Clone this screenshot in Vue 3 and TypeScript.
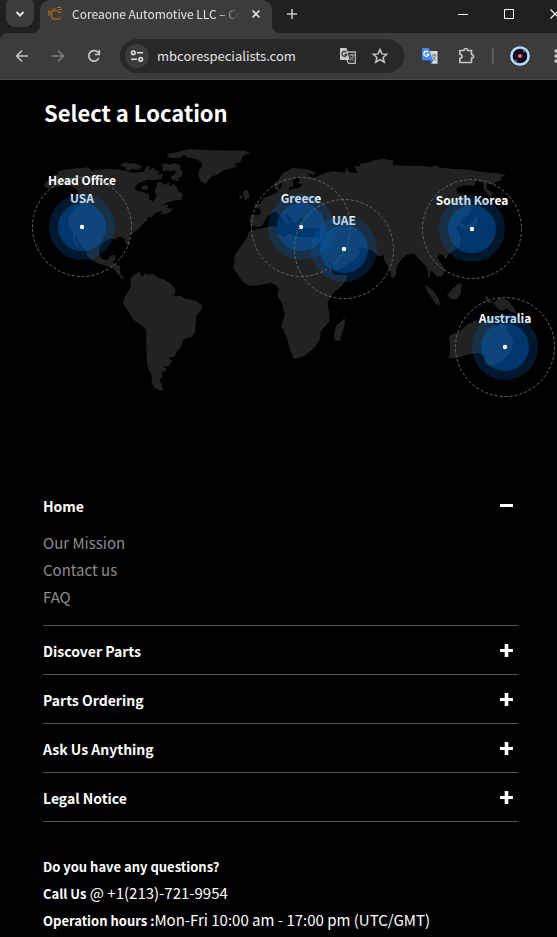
<script setup lang="ts">
import { ref } from 'vue'

interface Marker {
  lines: string[]
  x: number
  y: number
}

interface Section {
  title: string
  links: string[]
}

const MAP_WIDTH = 557
const MAP_HEIGHT = 260

const markers: Marker[] = [
  { lines: ['Head Office', 'USA'], x: 82, y: 87 },
  { lines: ['Greece'], x: 301, y: 87 },
  { lines: ['UAE'], x: 344, y: 109 },
  { lines: ['South Korea'], x: 472, y: 89 },
  { lines: ['Australia'], x: 505, y: 207 },
]

const sections: Section[] = [
  { title: 'Home', links: ['Our Mission', 'Contact us', 'FAQ'] },
  { title: 'Discover Parts', links: [] },
  { title: 'Parts Ordering', links: [] },
  { title: 'Ask Us Anything', links: [] },
  { title: 'Legal Notice', links: [] },
]

const openIndex = ref<number>(0)
const address = ref('mbcorespecialists.com')

function toggle(index: number): void {
  openIndex.value = openIndex.value === index ? -1 : index
}

function place(marker: Marker): Record<string, string> {
  return {
    left: `${(marker.x / MAP_WIDTH) * 100}%`,
    top: `${(marker.y / MAP_HEIGHT) * 100}%`,
  }
}
</script>

<template>
  <div class="window">
    <header class="chrome">
      <div class="tabstrip">
        <button class="tab-search" type="button" aria-label="Search tabs">
          <svg width="12" height="12" viewBox="0 0 12 12"><path d="M2.500 4l3.500 3.500L9.500 4" fill="none" stroke="#e3e3e3" stroke-width="2" /></svg>
        </button>
        <div class="tab">
          <svg class="favicon" width="16" height="16" viewBox="0 0 16 16" fill="none" stroke="#9a6526" stroke-width="1.400">
            <path d="M4 2.500h4M6 2.500v2" stroke="#76502a" />
            <path d="M1 4v6M1 7h2.500V5.500l2-1H9l2 2h1.500V5M3.500 7v3.500l2 2.500H11l1.500-1.500" />
            <path d="M12.500 7h2v4h-2z" stroke="#54442f" />
            <path d="M9 1.500h4M11 3.500h3" stroke="#a96f25" stroke-width="1" />
          </svg>
          <span class="tab-title">Coreaone Automotive LLC – Co</span>
          <button class="tab-close" type="button" aria-label="Close tab">
            <svg width="10" height="10" viewBox="0 0 10 10"><path d="M1.500 1.500l7 7M8.500 1.500l-7 7" stroke="#e3e3e3" stroke-width="1.600" /></svg>
          </button>
        </div>
        <button class="new-tab" type="button" aria-label="New tab">
          <svg width="12" height="12" viewBox="0 0 12 12"><path d="M6 1v10M1 6h10" stroke="#c7c7c7" stroke-width="1.600" /></svg>
        </button>
        <div class="window-controls">
          <button type="button" aria-label="Minimize"><svg width="10" height="10" viewBox="0 0 10 10"><path d="M0 5.500h10" stroke="#fff" /></svg></button>
          <button type="button" aria-label="Maximize"><svg width="10" height="10" viewBox="0 0 10 10"><path d="M.5.500h9v9h-9z" fill="none" stroke="#fff" /></svg></button>
          <button type="button" aria-label="Close"><svg width="10" height="10" viewBox="0 0 10 10"><path d="M.5.500l9 9M9.500.500l-9 9" stroke="#fff" stroke-width="1.200" /></svg></button>
        </div>
      </div>

      <div class="toolbar">
        <button class="tool" type="button" aria-label="Back">
          <svg width="16" height="16" viewBox="0 0 16 16" fill="none" stroke="#c7c7c7" stroke-width="1.600"><path d="M14 8H3M8 2.500L2.500 8 8 13.500" /></svg>
        </button>
        <button class="tool" type="button" aria-label="Forward">
          <svg width="16" height="16" viewBox="0 0 16 16" fill="none" stroke="#7c7c7c" stroke-width="1.600"><path d="M2 8h11M8 2.500L13.500 8 8 13.500" /></svg>
        </button>
        <button class="tool" type="button" aria-label="Reload">
          <svg width="16" height="16" viewBox="0 0 16 16" fill="none" stroke="#c7c7c7" stroke-width="1.700"><path d="M12.800 10.200A5.300 5.300 0 1 1 12 4.300l1.300 1.500M13.300 2v4.500H8.800" /></svg>
        </button>
        <div class="omnibox">
          <button class="site-info" type="button" aria-label="View site information">
            <svg width="14" height="14" viewBox="0 0 14 14" fill="none" stroke="#dedede" stroke-width="1.600"><circle cx="3.300" cy="3.800" r="1.800" /><path d="M7 3.800h6M1 10.300h6" /><circle cx="10.700" cy="10.300" r="1.800" /></svg>
          </button>
          <input v-model="address" class="address" type="text" aria-label="Address and search bar" />
          <button class="omni-icon" type="button" aria-label="Translate this page">
            <svg width="18" height="18" viewBox="0 0 18 18" fill="none">
              <path d="M8 5h8.300v11.300H9.500L8 13" stroke="#b8b8b8" stroke-width="1.300" />
              <path d="M1 1h6.500l3.200 12H1z" fill="#c7c7c7" />
              <path d="M7.200 5.300A2.400 2.400 0 1 0 7.700 7.500H5.500" stroke="#333" stroke-width="1.300" />
              <path d="M10.500 8h5M13 6.800V8M14.500 8c-.5 2.500-1.500 4-3.500 5.500M11 9.500c1 2 2.200 3.200 3.500 4" stroke="#b8b8b8" />
            </svg>
          </button>
          <button class="omni-icon" type="button" aria-label="Bookmark this tab">
            <svg width="18" height="18" viewBox="0 0 18 18" fill="none" stroke="#c7c7c7" stroke-width="1.500"><path d="M9 2.500l1.900 4.400 4.800.4-3.600 3.200 1.100 4.700L9 12.700l-4.200 2.500 1.100-4.700-3.600-3.200 4.800-.4z" /></svg>
          </button>
        </div>
        <div class="extensions">
          <button class="tool" type="button" aria-label="Google Translate">
            <svg width="18" height="18" viewBox="0 0 18 18" fill="none">
              <path d="M7 4h9.500v12.800H10z" fill="#dadada" />
              <path d="M9 13h3.500L10 17z" fill="#2457c5" />
              <path d="M1 1h6.800l4 12.200H1z" fill="#4688f4" />
              <path d="M7.300 5.200A2.500 2.500 0 1 0 7.800 7.300H5.500" stroke="#fff" stroke-width="1.300" />
              <path d="M10.500 8h5M13 6.800V8M14.500 8c-.5 2.500-1.500 4-3 5M11.500 9.500c1 2 2.200 3.200 3.500 4" stroke="#687782" />
            </svg>
          </button>
          <button class="tool" type="button" aria-label="Extensions">
            <svg width="18" height="18" viewBox="0 0 18 18"><path d="M2.800 3.500H7c0-2.600 3.500-2.600 3.500 0h4v4c2.700 0 2.700 3.500 0 3.500v4.500H2.800v-4c3-.3 3-4 0-4.300z" fill="none" stroke="#c7c7c7" stroke-width="1.600" stroke-linejoin="round" /></svg>
          </button>
          <span class="divider"></span>
          <button class="tool" type="button" aria-label="Profile">
            <svg width="20" height="20" viewBox="0 0 20 20">
              <circle cx="10" cy="10" r="8.600" fill="#080818" stroke="#b9dcf8" stroke-width="2.500" />
              <path d="M13 4.500l2 2M5 13.500l2 2" stroke="#505568" stroke-width="2" />
              <circle cx="10" cy="10" r="2.300" fill="#c52c55" /><circle cx="10" cy="10" r="1" fill="#ffc39c" />
            </svg>
          </button>
          <button class="tool" type="button" aria-label="Browser menu">
            <svg width="16" height="16" viewBox="0 0 16 16" fill="#c7c7c7"><circle cx="8" cy="3" r="1.700" /><circle cx="8" cy="8" r="1.700" /><circle cx="8" cy="13" r="1.700" /></svg>
          </button>
        </div>
      </div>
    </header>

    <main class="page">
      <h1 class="heading">Select a Location</h1>

      <section class="map" aria-label="Office locations">
        <svg class="land" viewBox="0 0 1671 780" fill="#222222" aria-hidden="true">
          <!-- North America and the Arctic islands -->
          <g transform="translate(60 0)">
            <path d="M75 128L102 112 99 105 116 102 113 94 150 87 206 82 215 93 260 86 300 89 340 98 372 95 376 82 388 78 390 90 402 80 405 91 418 95 414 104 429 102 424 118 398 120 382 119 366 126 355 130 345 142 348 151 374 158 386 162 389 178 398 185 407 174 410 165 402 152 411 140 411 125 426 128 435 135 447 126 449 140 461 132 470 140 472 150 488 163 485 180 458 182 439 190 421 198 445 193 441 204 458 207 437 223 428 222 424 212 405 220 392 233 384 230 382 240 365 255 356 267 341 277 328 287 329 315 320 314 315 299 305 291 293 291 289 298 270 296 249 307 239 322 237 341 246 358 262 361 270 347 286 344 287 355 279 369 300 378 301 402 315 419 303 413 289 397 279 384 262 379 238 371 214 360 201 346 200 334 186 320 169 289 163 288 169 306 179 326 168 315 160 293 157 275 144 254 145 235 160 211 179 195 181 175 175 155 157 139 136 132 118 137 103 143 84 146 73 137z" />
            <path d="M297 75L317 66 334 72 341 69 361 75 364 84 351 91 337 87 323 94 315 82z" />
            <path d="M424 75L438 70 448 74 467 69 482 78 480 87 489 95 483 113 473 112 478 124 459 120 451 110 470 99 463 91 450 94 438 91 426 95 430 84z" />
            <path d="M366 140l8-6 12 7-7 9-13-2zM440 43L468 37 506 27 542 29 520 38 509 48 492 45 481 53 449 55z" />
            <path d="M421 217l8 1-3 8zM438 222l16-18 4 4-8 8z" />
            <!-- South America -->
            <path d="M332 415L346 401 360 395 362 404 370 411 371 398 382 403 403 403 413 413 430 418 451 430 463 443 467 458 459 468 482 467 499 478 524 481 546 494 544 509 530 526 525 578 515 590 488 599 483 623 474 630 461 652 444 652 456 663 447 677 431 679 441 689 424 700 429 709 419 718 429 746 428 752 417 751 402 742 394 725 397 710 383 682 379 637 378 570 369 560 339 538 316 501 309 488 314 470 331 444z" />
          </g>
          <path d="M561 40L600 30 735 32 750 39 728 47 722 65 703 72 712 80 671 91 650 104 634 110 616 132 601 123 595 104 597 91 606 80 604 66 587 56 556 51z" />
          <!-- Europe, Africa and Arabia -->
          <g transform="translate(600 0)">
            <path d="M221 132L235 119 248 100 277 84 320 87 347 97 342 104 321 101 331 110 347 112 378 97 404 94 435 98 440 78 446 97 472 99 464 76 478 80 481 71 516 66 570 59 570 390 554 362 550 344 532 348 520 333 496 325 475 324 481 337 475 352 453 366 435 381 413 389 402 390 397 377 383 359 367 330 354 305 359 291 360 265 338 262 324 266 311 262 297 249 310 240 300 230 289 252 278 246 262 222 253 225 270 246 263 255 244 231 227 215 216 220 207 225 193 244 186 258 171 262 151 254 149 231 157 225 181 224 181 208 165 202 161 192 179 192 191 174 215 165 230 158 244 140 247 126 235 136 237 153 226 150z" />
            <path d="M133 181l16-7-2-16-9-10-9 8 3 12zM119 168l11-2-4 10-9-1z" />
            <path d="M171 267L219 259 233 261 231 278 254 291 264 281 301 291 351 292 362 321 387 362 400 403 412 405 440 404 440 418 426 437 400 459 382 488 387 516 388 545 362 573 361 595 345 621 317 646 300 653 281 656 270 630 260 591 244 557 254 524 246 490 232 467 236 448 226 434 212 428 180 436 146 437 126 422 101 387 104 346 130 308 143 291 145 277z" />
            <path d="M434 534L435 553 419 602 406 602 401 591 408 558z" />
            <!-- Baltic Sea -->
            <path d="M286 112l16 4-10 12 16 6-12 10-18 2-12 8 2-12 12-4-2-14z" fill="#000000" />
          </g>
          <!-- Asia -->
          <g transform="translate(1101 0)">
            <path d="M0 70L22 60 53 57 80 62 77 76 120 77 147 79 163 77 192 82 203 75 221 83 262 87 290 88 333 94 367 98 405 101 418 109 401 111 404 120 385 127 378 134 361 130 358 147 378 159 372 172 351 151 348 129 328 122 320 138 299 135 284 138 269 144 269 158 292 165 309 180 314 202 310 222 294 232 279 244 288 255 305 264 288 265 275 253 267 265 280 289 280 314 265 330 247 340 235 360 230 347 218 342 211 354 224 371 235 391 225 409 211 410 197 396 191 391 188 413 183 414 184 396 174 374 153 355 141 340 117 345 101 361 89 381 87 406 75 416 65 383 56 365 51 344 39 350 19 333 0 324z" />
            <path d="M326 227l7 7-2 16-22 13-7-3 14-14z" />
            <path d="M172 434L196 449 215 475 221 496 207 493 194 473 184 458zM240 466L258 445 276 429 285 434 281 460 270 479 251 476z" />
            <!-- Australia and New Guinea -->
            <path d="M352 470l12-2v13l19 6 13-15 24 7 21 24 7 17-16-5-12-11-13 8-13-4-16-19-17-1z" />
            <path d="M247 589L258 582 276 576 303 551 318 546 323 541 340 549 345 535 363 540 379 530 376 547 392 563 402 548 416 557 426 580 440 602 433 633 411 657 394 670 366 678 353 668 355 648 333 638 299 645 272 653 244 656 249 639z" />
          </g>
        </svg>

        <div v-for="marker in markers" :key="marker.lines[0]" class="marker" :style="place(marker)">
          <p class="marker-label">
            <span v-for="line in marker.lines" :key="line">{{ line }}</span>
          </p>
          <svg class="rings" width="100" height="100" viewBox="0 0 100 100" aria-hidden="true">
            <circle cx="50" cy="50" r="49.500" fill="none" stroke="#666666" stroke-dasharray="3 2" />
            <circle cx="50" cy="50" r="33" fill="rgba(0, 100, 195, 0.24)" />
            <circle cx="50" cy="50" r="24" fill="rgba(0, 100, 195, 0.42)" />
            <circle cx="50" cy="50" r="2.200" fill="#ffffff" />
          </svg>
        </div>
      </section>

      <nav class="accordion" aria-label="Footer">
        <section v-for="(section, index) in sections" :key="section.title" class="group">
          <h2 class="group-heading">
            <button class="group-toggle" type="button" :aria-expanded="openIndex === index" @click="toggle(index)">
              <span>{{ section.title }}</span>
              <svg width="13" height="13" viewBox="0 0 13 13" aria-hidden="true">
                <path d="M0 6.500h13" stroke="#fff" stroke-width="3" />
                <path v-if="openIndex !== index" d="M6.500 0v13" stroke="#fff" stroke-width="3.600" />
              </svg>
            </button>
          </h2>
          <ul v-if="openIndex === index && section.links.length" class="links">
            <li v-for="link in section.links" :key="link"><a href="#">{{ link }}</a></li>
          </ul>
        </section>
      </nav>

      <footer class="contact">
        <p><strong>Do you have any questions?</strong></p>
        <p><strong>Call Us</strong> @ +1(213)-721-9954</p>
        <p><strong>Operation hours :</strong>Mon-Fri 10:00 am - 17:00 pm (UTC/GMT)</p>
      </footer>
    </main>
  </div>
</template>

<style>
body {
  margin: 0;
  background: #000000;
}
</style>

<style scoped>
.window {
  min-height: 100vh;
  overflow: hidden;
  background: #000000;
  color: #ffffff;
  font-family: "Noto Sans CJK KR", "Noto Sans", sans-serif;
}

button {
  display: flex;
  align-items: center;
  justify-content: center;
  flex: none;
  margin: 0;
  padding: 0;
  border: 0;
  background: none;
  color: inherit;
  font: inherit;
}

svg {
  display: block;
  flex: none;
}

.chrome {
  border-bottom: 1px solid #4a4a4a;
  background: #1f2120;
}

.tabstrip {
  display: flex;
  height: 33px;
  overflow: hidden;
}

.tab-search {
  width: 28px;
  height: 27px;
  margin: 0 6px;
  border-radius: 4px 4px 9px 9px;
  background: #3c3c3c;
}

.tab {
  position: relative;
  display: flex;
  align-items: center;
  flex: 0 1 216px;
  gap: 8px;
  min-width: 0;
  padding: 0 8px;
  height: 28px;
  border-bottom: 5px solid #3c3c3c;
  border-radius: 10px 10px 0 0;
  background: #3c3c3c;
}

.tab::before,
.tab::after {
  position: absolute;
  bottom: -5px;
  width: 8px;
  height: 8px;
  content: "";
}

.tab::before {
  right: 100%;
  background: radial-gradient(circle at 0 0, transparent 8px, #3c3c3c 8px);
}

.tab::after {
  left: 100%;
  background: radial-gradient(circle at 100% 0, transparent 8px, #3c3c3c 8px);
}

.tab-title {
  flex: 1;
  overflow: hidden;
  font-size: 12px;
  line-height: 18px;
  white-space: nowrap;
  color: #e3e3e3;
  mask-image: linear-gradient(to right, #000 88%, transparent);
}

.tab-close {
  width: 16px;
  height: 16px;
}

.new-tab {
  width: 28px;
  height: 27px;
  margin-left: 6px;
}

.window-controls {
  display: flex;
  flex: 0 0 117px;
  height: 27px;
  margin-left: auto;
  overflow: hidden;
}

.window-controls button {
  width: 46px;
}

.toolbar {
  display: flex;
  align-items: center;
  height: 46px;
  padding-left: 4px;
  border-radius: 8px 0 0 0;
  background: #3c3c3c;
}

.tool {
  width: 36px;
  height: 34px;
}

.omnibox {
  display: flex;
  align-items: center;
  flex: 1;
  min-width: 0;
  height: 34px;
  margin-left: 8px;
  padding: 0 8px 0 5px;
  border-radius: 17px;
  background: #282828;
}

.site-info {
  width: 24px;
  height: 24px;
  border-radius: 50%;
  background: #3c3c3c;
}

.address {
  flex: 1;
  min-width: 0;
  margin: 0;
  padding: 0 8px;
  border: 0;
  outline: 0;
  background: none;
  color: #e3e3e3;
  font: 13px/20px "Noto Sans CJK KR", sans-serif;
}

.omni-icon {
  width: 32px;
  height: 32px;
}

.extensions {
  display: flex;
  align-items: center;
  flex: 0 0 145px;
  padding-left: 8px;
  overflow: hidden;
}

.divider {
  flex: none;
  width: 2px;
  height: 16px;
  margin: 0 8px;
  background: #5c5c5c;
}

.heading {
  margin: 14px 44px 10px;
  font-size: 22px;
  font-weight: 700;
  line-height: 36px;
}

.map {
  position: relative;
  margin-bottom: 81px;
}

.land {
  width: 100%;
  height: auto;
}

.marker {
  position: absolute;
  width: 0;
  height: 0;
}

.marker-label {
  position: absolute;
  bottom: 20px;
  left: 0;
  margin: 0;
  transform: translateX(-50%);
  font-size: 12px;
  font-weight: 700;
  line-height: 18px;
  text-align: center;
  white-space: nowrap;
}

.marker-label span {
  display: block;
}

.rings {
  position: absolute;
  top: -50px;
  left: -50px;
}

.accordion {
  margin: 0 39px 30px 43px;
}

.group {
  border-bottom: 1px solid #555555;
}

.group-heading {
  margin: 0;
  font-size: 14px;
  font-weight: 700;
  line-height: 24px;
}

.group-toggle {
  justify-content: space-between;
  width: 100%;
  height: 48px;
  padding: 1px 5px 0 0;
}

.links {
  margin: 0;
  padding: 0 0 15px;
  list-style: none;
  font-size: 15px;
  line-height: 27px;
}

.links a {
  color: #8c8c8c;
  text-decoration: none;
}

.contact {
  margin: 0 39px 0 43px;
  font-size: 15px;
  line-height: 27px;
}

.contact p {
  margin: 0;
}

.contact strong {
  font-size: 13px;
  font-weight: 700;
  line-height: 18px;
}
</style>
